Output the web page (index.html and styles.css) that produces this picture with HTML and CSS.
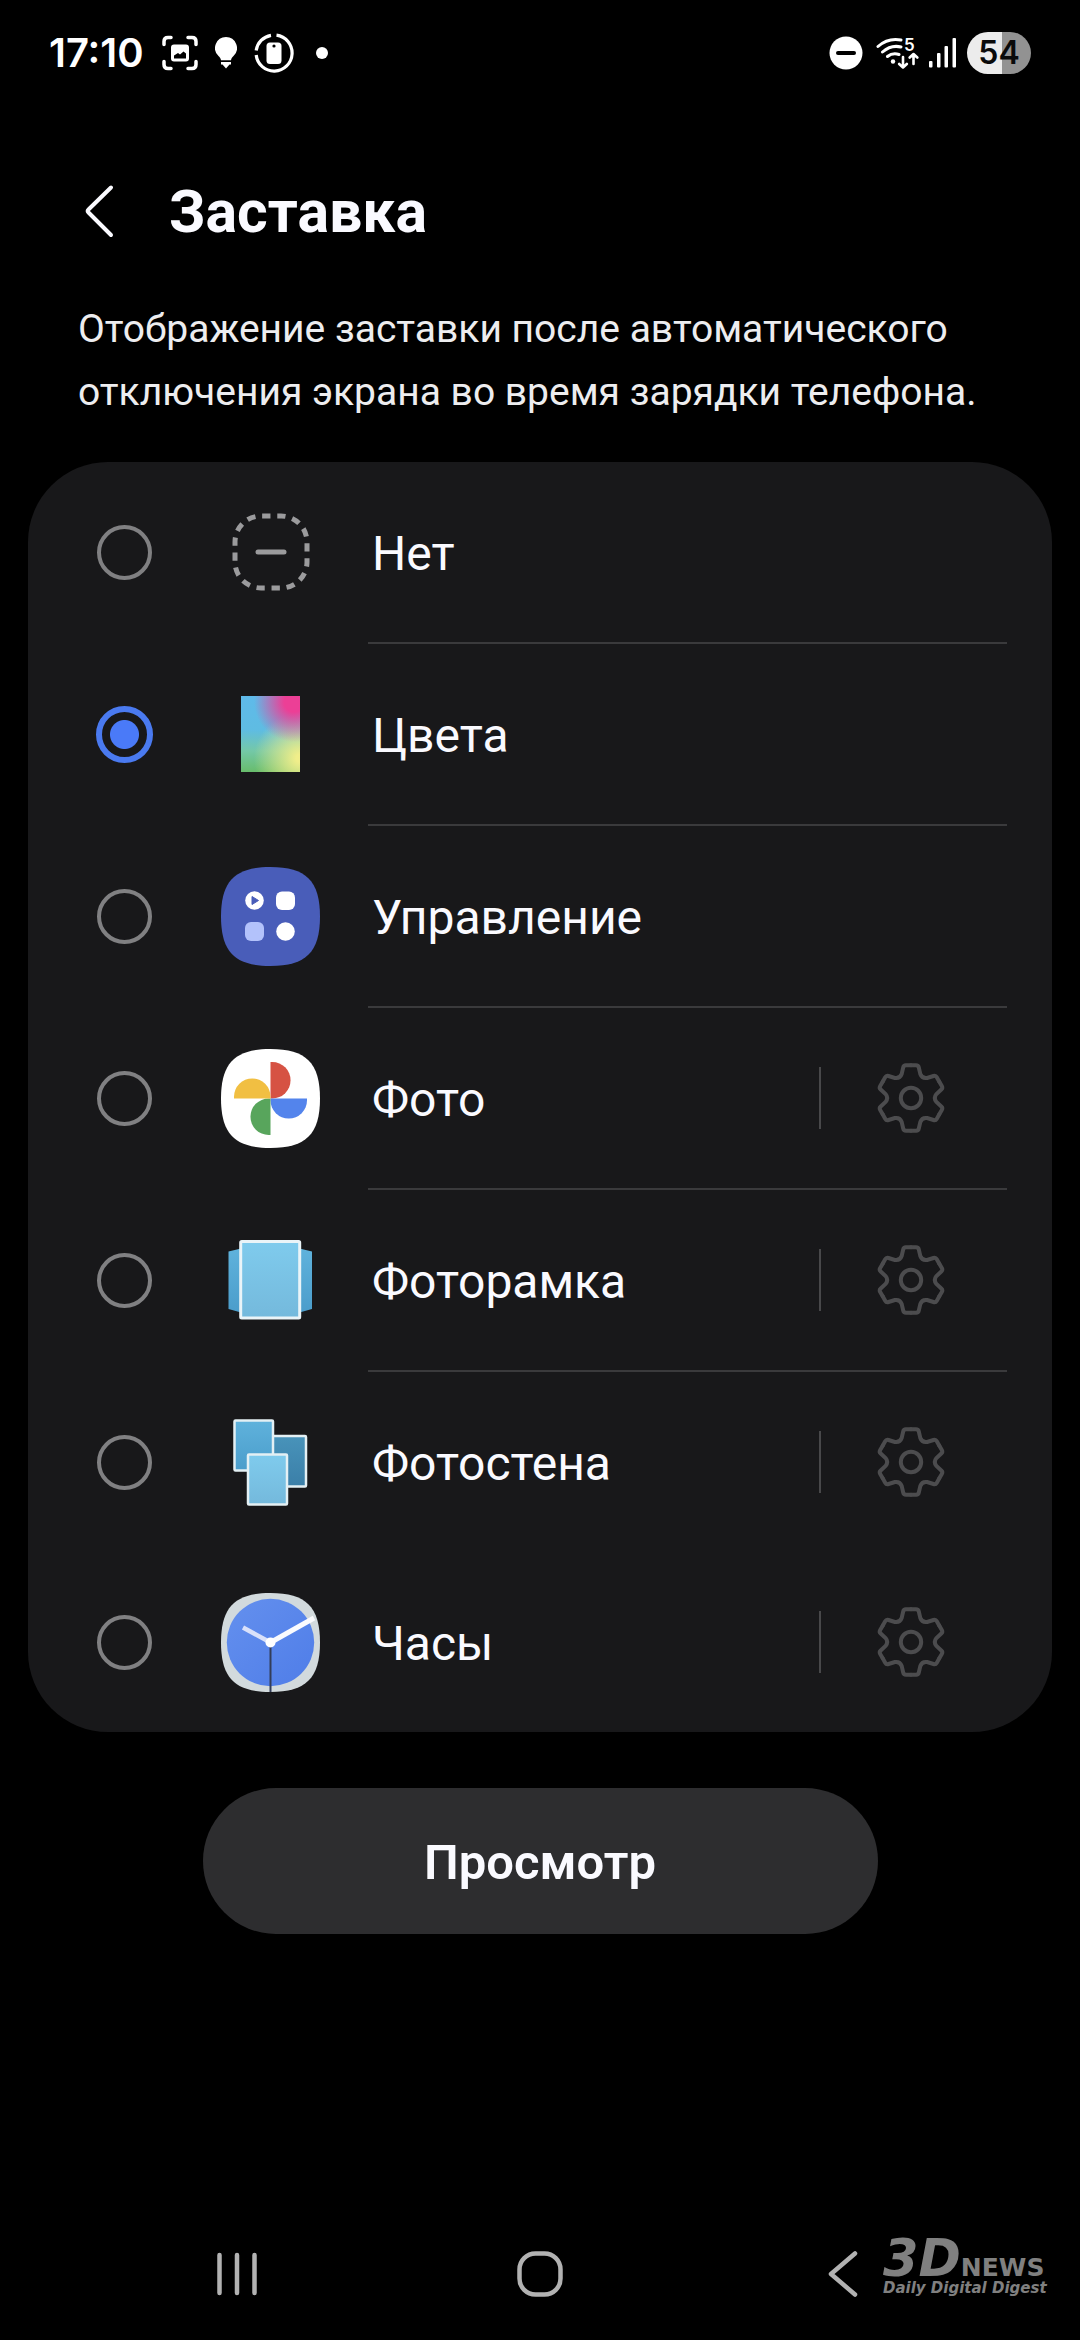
FILE: index.html
```html
<!DOCTYPE html>
<html lang="ru">
<head>
<meta charset="utf-8">
<meta name="viewport" content="width=device-width, initial-scale=1">
<title>Заставка</title>
<link rel="stylesheet" href="styles.css">
</head>
<body>
<svg class="defs" aria-hidden="true">
  <defs>
    <path id="squircle" d="M49.500 0C14 0 0 14 0 49.500S14 99 49.500 99 99 85 99 49.500 85 0 49.500 0Z"/>
    <path id="tooth" d="M0-32.700H5Q7.300-32.700 7.800-30.500L9.300-24Q11.100-19.200 16.100-20.050L22.500-22Q24.700-22.700 25.800-20.700L28.300-16.350"/>
    <symbol id="gear" viewBox="-36 -36 72 72">
      <g fill="none" stroke="#4c4c4e" stroke-width="4" stroke-linecap="round">
        <use href="#tooth"/>
        <use href="#tooth" transform="rotate(60)"/>
        <use href="#tooth" transform="rotate(120)"/>
        <use href="#tooth" transform="rotate(180)"/>
        <use href="#tooth" transform="rotate(240)"/>
        <use href="#tooth" transform="rotate(300)"/>
        <circle r="10.200"/>
      </g>
    </symbol>
    <linearGradient id="sky" x2="0" y2="1"><stop stop-color="#7fcbed"/><stop offset="1" stop-color="#74b9dc"/></linearGradient>
    <linearGradient id="mid" x2="0" y2="1"><stop stop-color="#5fb2dc"/><stop offset="1" stop-color="#4b9dcb"/></linearGradient>
    <linearGradient id="deep" x2="0" y2="1"><stop stop-color="#4893ba"/><stop offset="1" stop-color="#3b7fa8"/></linearGradient>
    <linearGradient id="dial" x2="1" y2="1"><stop stop-color="#6490ee"/><stop offset="1" stop-color="#4f7de8"/></linearGradient>
  </defs>
</svg>

<div class="screen">
  <header class="status">
    <div class="status-left">
      <time class="clock">17:10</time>
      <svg width="37" height="36" viewBox="0 0 37 36" fill="none" stroke="#fff" stroke-width="3.500" stroke-linecap="round">
        <path d="M10 2.500H7Q3 2.500 3 6.500V9.500M27 2.500h4q4 0 4 4V9.500M10 33.500H7q-4 0-4-4V26.500M27 33.500h4q4 0 4-4V26.500"/>
        <path d="M13 9.500h12a3 3 0 0 1 3 3v11a3 3 0 0 1-3 3H13a3 3 0 0 1-3-3v-11a3 3 0 0 1 3-3zm0 14h12v-5l-2.500-2-3.500 3-2-1.500-4 2.500z" fill="#fff" fill-rule="evenodd" stroke="none"/>
      </svg>
      <svg width="22" height="34" viewBox="0 0 22 34" fill="#fff">
        <path d="M11 1a11 11 0 0 1 7.500 19c-1.500 1.500-2.200 2.500-2.500 4.200H6c-.3-1.700-1-2.700-2.500-4.200A11 11 0 0 1 11 1zM6 26h10v2.500h-1.500L11 32.500 7.500 28.500H6z"/>
      </svg>
      <svg width="40" height="40" viewBox="0 0 40 40">
        <path d="M22.500 2.200A18 18 0 1 1 2.200 22M2.200 17.500A18 18 0 0 1 17 2.300" fill="none" stroke="#fff" stroke-width="3.200"/>
        <rect x="12.500" y="9.500" width="15" height="21.500" rx="3.500" fill="#fff"/>
        <circle cx="20" cy="13" r="1.600"/>
      </svg>
      <svg width="22" height="12" viewBox="0 0 22 12"><circle cx="11" cy="6" r="6" fill="#fff"/></svg>
    </div>
    <div class="status-right">
      <svg width="37" height="34" viewBox="0 0 37 34">
        <circle cx="17" cy="17" r="16.500" fill="#fff"/>
        <path d="M9 17h16" stroke="#000" stroke-width="4" stroke-linecap="round"/>
      </svg>
      <svg width="43" height="34" viewBox="0 0 43 34" fill="none" stroke="#fff" stroke-width="3" stroke-linecap="round" stroke-linejoin="round">
        <path d="M2 10.500Q12 1.500 25 4M6.500 16Q15 8.500 25 11M11.500 20.500q5-4 11.500-2"/>
        <circle cx="17" cy="25.500" r="2.200" fill="#fff" stroke="none"/>
        <path d="M27 21v10M23.200 28l3.800 3.500 3.800-3.500M37.500 28V18.500M33.700 21.500l3.800-3.500 3.800 3.500" stroke-width="2.600"/>
        <text class="wifi-band" x="28" y="15">5</text>
      </svg>
      <svg width="28" height="30" viewBox="0 0 28 30" fill="#fff">
        <rect x="0" y="23" width="3.500" height="6.500" rx="1"/><rect x="8" y="15" width="3.500" height="14.500" rx="1"/><rect x="15.500" y="8" width="3.500" height="21.500" rx="1"/><rect x="23.500" y="0" width="3.500" height="29.500" rx="1"/>
      </svg>
      <span class="battery">54</span>
    </div>
  </header>

  <main>
    <div class="title-bar">
      <button class="back" type="button" aria-label="Назад">
        <svg width="44" height="60" viewBox="0 0 44 60" fill="none" stroke="#fafaff" stroke-width="4" stroke-linecap="round" stroke-linejoin="round"><path d="M33 5.500 10.500 27.500Q9 29 10.500 30.500L33 53"/></svg>
      </button>
      <h1>Заставка</h1>
    </div>
    <p class="description">Отображение заставки после автоматического отключения экрана во время зарядки телефона.</p>

    <ul class="card">
      <li>
        <div class="row">
          <label class="option">
            <input type="radio" name="saver">
            <svg class="icon" viewBox="0 0 99 99" fill="none" stroke="#9b9b9d" stroke-width="5">
              <rect x="14" y="13" width="72" height="72" rx="26" pathLength="32" stroke-dasharray="1.100 .9" stroke-dashoffset="-.15"/>
              <path d="M37 49h26" stroke-linecap="round"/>
            </svg>
            <span>Нет</span>
          </label>
        </div>
      </li>
      <li>
        <div class="row">
          <label class="option">
            <input type="radio" name="saver" checked>
            <span class="icon"><span class="palette"></span></span>
            <span>Цвета</span>
          </label>
        </div>
      </li>
      <li>
        <div class="row">
          <label class="option">
            <input type="radio" name="saver">
            <svg class="icon" viewBox="0 0 99 99" fill="#fff">
              <use href="#squircle" fill="#495db9"/>
              <circle cx="33.500" cy="33.500" r="9.300"/>
              <path d="M31 29.500v8l6.500-4z" fill="#495db9" stroke="#495db9" stroke-linejoin="round"/>
              <rect x="55" y="24.500" width="19" height="18.500" rx="6"/>
              <rect x="24" y="55" width="19" height="19" rx="6" fill="#b3c2fb"/>
              <circle cx="64.500" cy="64.500" r="9.300"/>
            </svg>
            <span>Управление</span>
          </label>
        </div>
      </li>
      <li>
        <div class="row">
          <label class="option">
            <input type="radio" name="saver">
            <svg class="icon" viewBox="0 0 99 99">
              <use href="#squircle" fill="#fff"/>
              <path d="M49.500 13h1.800a18.200 18.200 0 0 1 0 36.500h-1.800z" fill="#d65243"/>
              <path d="M49.500 13h1.800a18.200 18.200 0 0 1 0 36.500h-1.800z" fill="#5384ec" transform="rotate(90 49.500 49.500)"/>
              <path d="M49.500 13h1.800a18.200 18.200 0 0 1 0 36.500h-1.800z" fill="#58a55c" transform="rotate(180 49.500 49.500)"/>
              <path d="M49.500 13h1.800a18.200 18.200 0 0 1 0 36.500h-1.800z" fill="#f1bf42" transform="rotate(270 49.500 49.500)"/>
            </svg>
            <span>Фото</span>
          </label>
          <span class="separator"></span>
          <button class="settings" type="button" aria-label="Настройки: Фото"><svg width="72" height="72"><use href="#gear"/></svg></button>
        </div>
      </li>
      <li>
        <div class="row">
          <label class="option">
            <input type="radio" name="saver">
            <svg class="icon" viewBox="0 0 99 99">
              <path d="M7.500 20.500 20 17.500V81.500L7.500 78zM91 20.500 78.500 17.500V81.500L91 78z" fill="url(#mid)"/>
              <rect x="19.700" y="10.500" width="59" height="76.500" rx="1" fill="url(#sky)" stroke="#eaf4f8" stroke-width="3"/>
            </svg>
            <span>Фоторамка</span>
          </label>
          <span class="separator"></span>
          <button class="settings" type="button" aria-label="Настройки: Фоторамка"><svg width="72" height="72"><use href="#gear"/></svg></button>
        </div>
      </li>
      <li>
        <div class="row">
          <label class="option">
            <input type="radio" name="saver">
            <svg class="icon" viewBox="0 0 99 99" stroke="#e4f0f4" stroke-width="2.500">
              <rect x="45" y="23" width="40" height="50.500" rx="1" fill="url(#deep)"/>
              <rect x="13.500" y="7.500" width="38.500" height="50" rx="1" fill="url(#mid)"/>
              <rect x="27" y="41.500" width="39" height="50" rx="1" fill="url(#sky)"/>
            </svg>
            <span>Фотостена</span>
          </label>
          <span class="separator"></span>
          <button class="settings" type="button" aria-label="Настройки: Фотостена"><svg width="72" height="72"><use href="#gear"/></svg></button>
        </div>
      </li>
      <li>
        <div class="row">
          <label class="option">
            <input type="radio" name="saver">
            <svg class="icon" viewBox="0 0 99 99" fill="none">
              <use href="#squircle" fill="#d2dadd"/>
              <circle cx="49.500" cy="49.500" r="43.700" fill="url(#dial)"/>
              <path d="M49.500 52v47" stroke="#333d58" stroke-width="2"/>
              <path d="M49.500 49.500 22 34.500" stroke="#d9e1fa" stroke-width="4.500"/>
              <path d="M49.500 49.500 93 25" stroke="#fafbfe" stroke-width="5"/>
              <circle cx="49.500" cy="49.500" r="5" fill="#fff"/>
            </svg>
            <span>Часы</span>
          </label>
          <span class="separator"></span>
          <button class="settings" type="button" aria-label="Настройки: Часы"><svg width="72" height="72"><use href="#gear"/></svg></button>
        </div>
      </li>
    </ul>

    <button class="preview" type="button">Просмотр</button>
  </main>

  <nav class="system-nav">
    <button type="button" aria-label="Последние"><svg width="48" height="48" viewBox="0 0 48 48" stroke="#b2b2b2" stroke-width="4.500" stroke-linecap="round"><path d="M6.500 5v38M24 5v38M41.500 5v38"/></svg></button>
    <button type="button" aria-label="Главный экран"><svg width="48" height="48" viewBox="0 0 48 48" fill="none" stroke="#b2b2b2" stroke-width="4.500"><rect x="3.500" y="3.500" width="41" height="41" rx="16"/></svg></button>
    <button type="button" aria-label="Назад"><svg width="48" height="48" viewBox="0 0 48 48" fill="none" stroke="#b2b2b2" stroke-width="4.500" stroke-linecap="round" stroke-linejoin="round"><path d="M36 3.500 12 24 36 44.500"/></svg></button>
  </nav>

  <div class="watermark">
    <div class="brand"><span class="brand-3d">3D</span><span class="brand-news">NEWS</span></div>
    <div class="tagline">Daily Digital Digest</div>
  </div>
</div>
</body>
</html>
```
FILE: styles.css
```css
* {
  box-sizing: border-box;
}

body {
  margin: 0;
  background: #000;
  color: #fafaff;
  font-family: Roboto, "Noto Sans", sans-serif;
}

button {
  padding: 0;
  border: 0;
  background: none;
  color: inherit;
  font: inherit;
}

svg {
  display: block;
  flex: none;
}

.defs {
  position: absolute;
  width: 0;
  height: 0;
}

.screen {
  position: relative;
  display: flex;
  flex-direction: column;
  min-height: 100vh;
}

/* Status bar */
.status {
  display: flex;
  justify-content: space-between;
  align-items: center;
  height: 106px;
  padding: 0 49px;
  color: #fff;
  font-family: Inter, sans-serif;
  font-weight: 600;
}

.status-left,
.status-right {
  display: flex;
  align-items: center;
}

.status-left {
  gap: 17px;
}

.status-right {
  gap: 10px;
}

.clock {
  font-size: 40px;
  line-height: 48px;
}

.wifi-band {
  fill: #fff;
  stroke: none;
  font-size: 17px;
}

.battery {
  width: 64px;
  border-radius: 21px;
  background: linear-gradient(90deg, #ececec 54%, #929292 54%);
  color: #0a0a0a;
  font-size: 32px;
  line-height: 42px;
  text-align: center;
}

/* Title and description */
.title-bar {
  display: flex;
  align-items: center;
  gap: 47px;
  padding: 71px 78px 51px;
}

h1 {
  margin: 0;
  font-size: 59px;
  font-weight: 700;
  line-height: 70px;
}

.description {
  margin: 0;
  padding: 0 78px;
  color: #ededef;
  font-size: 39px;
  line-height: 63px;
}

/* List of screen savers */
.card {
  margin: 38px 28px 0;
  padding: 0;
  border-radius: 80px;
  background: #18181a;
  list-style: none;
}

.card li:nth-child(-n + 5)::after {
  content: "";
  display: block;
  height: 2px;
  margin: 0 45px 0 340px;
  background: #3a3a3c;
}

.row {
  display: flex;
  align-items: center;
  min-height: 180px;
}

.option {
  display: flex;
  flex: 1;
  align-items: center;
  padding-left: 68px;
  font-size: 48px;
  line-height: 60px;
}

.option > span:last-child {
  padding-top: 3px;
}

.option input {
  flex: none;
  width: 55px;
  height: 55px;
  margin: 0 69px 0 1px;
  border: 4px solid #808082;
  border-radius: 50%;
  appearance: none;
}

.option input:checked {
  width: 57px;
  height: 57px;
  margin: 0 68px 0 0;
  border: 6px solid #4a7af0;
  background: radial-gradient(circle, #4a7af8 14px, transparent 15px);
}

.icon {
  display: flex;
  flex: none;
  align-items: center;
  justify-content: center;
  width: 99px;
  height: 99px;
  margin-right: 52px;
}

.palette {
  width: 59px;
  height: 76px;
  background:
    radial-gradient(circle at 90% 8%, #ec3f96 10px, #ec3f9600 40px),
    radial-gradient(circle at 100% 82%, #f0ee8a 4px, #f0ee8a00 46px),
    linear-gradient(#5fbaea, #5fbce2 45%, #74c8a8 72%, #68bd6c);
}

.separator {
  width: 2px;
  height: 62px;
  background: #48484a;
}

.settings {
  display: flex;
  align-items: center;
  justify-content: center;
  width: 180px;
  height: 180px;
  margin-right: 51px;
}

.preview {
  display: block;
  width: 62.5%;
  margin: 56px auto 0;
  padding: 45px 0 41px;
  border-radius: 73px;
  background: #2d2d2f;
  font-size: 49px;
  font-weight: 600;
  line-height: 60px;
}

/* System navigation */
.system-nav {
  display: grid;
  grid-template-columns: repeat(3, 1fr);
  height: 132px;
  margin-top: auto;
  padding: 0 86px;
}

.system-nav button {
  display: flex;
  align-items: center;
  justify-content: center;
}

/* Watermark over the bottom corner */
.watermark {
  position: absolute;
  right: 32px;
  bottom: 44px;
  width: 165px;
  color: #808080;
  font-family: "DejaVu Sans", sans-serif;
  font-weight: 700;
}

.brand {
  display: flex;
  align-items: baseline;
}

.brand-3d {
  font-size: 51px;
  font-style: italic;
  line-height: 40px;
}

.brand-news {
  font-size: 25px;
  line-height: 24px;
}

.tagline {
  font-size: 15px;
  font-style: italic;
  line-height: 16px;
  white-space: nowrap;
}
```
